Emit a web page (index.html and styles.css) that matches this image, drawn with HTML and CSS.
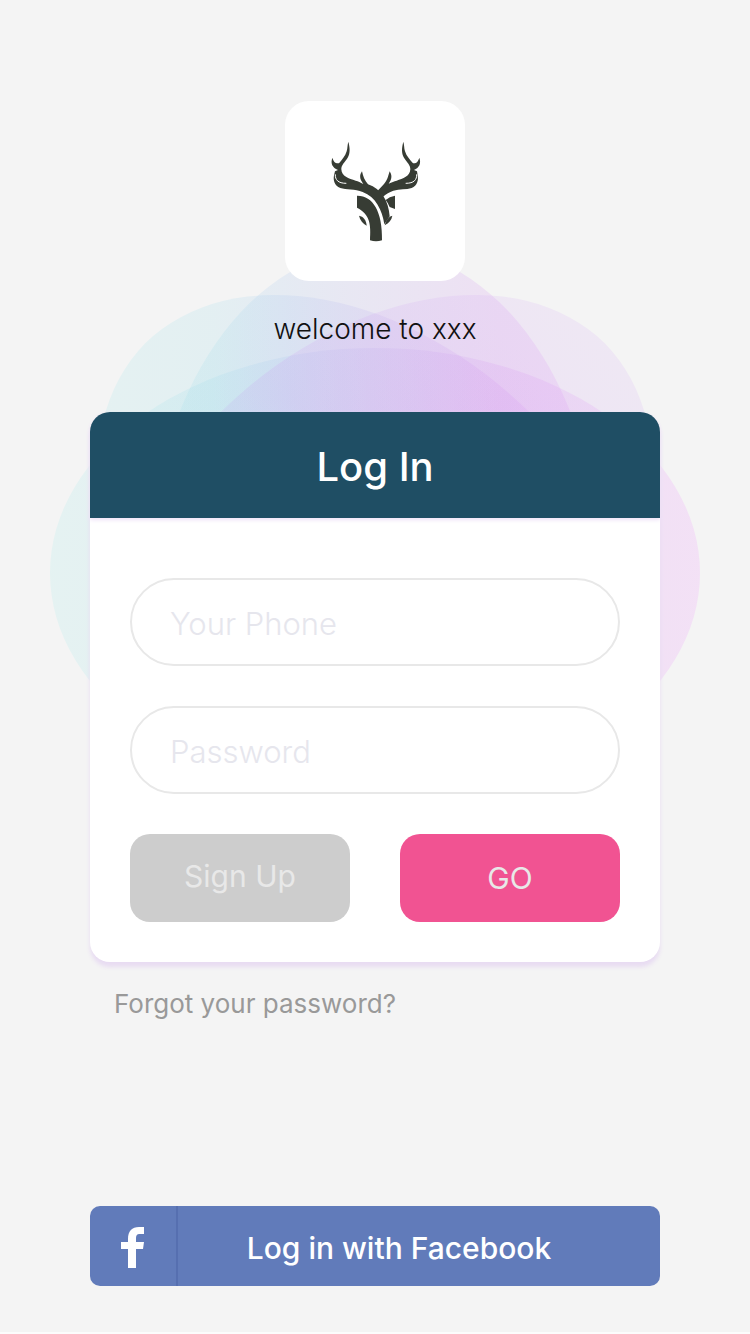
FILE: index.html
```html
<!DOCTYPE html>
<html lang="en">
<head>
  <meta charset="utf-8">
  <meta name="viewport" content="width=device-width, initial-scale=1">
  <title>Log In</title>
  <link rel="stylesheet" href="styles.css">
</head>
<body>
  <main class="page">
    <svg class="petals" viewBox="0 0 650 650" aria-hidden="true">
      <defs>
        <linearGradient id="tint" gradientUnits="userSpaceOnUse" x1="0" y1="0" x2="650" y2="0">
          <stop offset="0" stop-color="#a8ebea"/>
          <stop offset=".25" stop-color="#a0dcea"/>
          <stop offset=".36" stop-color="#a9c6ee"/>
          <stop offset=".5" stop-color="#beaeee"/>
          <stop offset=".69" stop-color="#d690f0"/>
          <stop offset="1" stop-color="#ee94fc"/>
        </linearGradient>
        <linearGradient id="tint-left" gradientUnits="userSpaceOnUse" x1="95" y1="555" x2="555" y2="95">
          <stop offset="0" stop-color="#a0e0ea"/>
          <stop offset=".3" stop-color="#a8d0f0"/>
          <stop offset=".6" stop-color="#cc9cf0"/>
          <stop offset="1" stop-color="#d8b4f4"/>
        </linearGradient>
      </defs>
      <g fill="url(#tint)" fill-opacity=".2">
        <ellipse cx="325" cy="325" rx="325" ry="225"/>
        <ellipse cx="325" cy="325" rx="225" ry="325"/>
        <path d="M95.200 95.200A325 225 45 0 1 554.800 554.800A325 225 45 0 1 95.200 95.200Z"/>
        <path fill="url(#tint-left)" d="M554.800 95.200A325 225 -45 0 1 95.200 554.800A325 225 -45 0 1 554.800 95.200Z"/>
      </g>
    </svg>

    <header class="brand">
      <div class="logo">
        <svg class="logo-mark" viewBox="0 0 330 360" role="img" aria-label="Deer head logo">
          <g fill="#373c34">
            <path d="M85 32C90 50 91 67 83 80C74 94 63 103 64 115C65 136 86 143 107 149C115 151 121 154 130 159C118 144 118 132 126 121C129 135 134 149 144 160C184 174 206 210 209 256L193 280C187 238 167 197 128 183C105 174 78 176 61 171C43 164 39 148 42 133L45 121L54 117C37 109 31 98 37 80C40 89 44 98 57 97C65 87 76 75 80 61C83 51 82 42 85 32Z"/>
            <path d="M250 32C245 50 244 67 252 80C261 94 272 103 271 115C270 136 249 143 230 149C222 151 216 154 206 158C217 144 216 132 209 121C204 137 201 151 190 161L173 179Q182 187 189 197C200 187 207 184 220 179C239 174 259 176 275 171C292 164 296 148 293 133L291 121L282 117C298 109 304 98 298 80C295 89 291 98 279 97C271 87 259 75 255 61C252 51 253 42 250 32Z"/>
            <path d="M111 194C158 193 188 241 186 328Q168 334 150 328C153 281 151 250 111 230Z"/>
            <path d="M197 207Q208 197 225 194V234L209 228Q205 217 197 207Z"/>
            <path d="M117 254C130 256 139 267 140 284C129 278 120 268 117 254Z"/>
            <path d="M217 254C206 257 199 265 194 283C207 276 215 267 217 254Z"/>
          </g>
          <path d="M46 130C45 146 54 157 79 157M290 130C291 146 282 157 257 157" fill="none" stroke="#fff" stroke-width="3"/>
        </svg>
      </div>
      <p class="welcome">welcome to xxx</p>
    </header>

    <form class="card">
      <h1 class="card-title">Log In</h1>
      <div class="card-body">
        <input class="field" type="tel" aria-label="Your Phone" placeholder="Your Phone">
        <input class="field" type="password" aria-label="Password" placeholder="Password">
        <div class="actions">
          <button class="button button-muted" type="button">Sign Up</button>
          <button class="button button-primary" type="submit">GO</button>
        </div>
      </div>
    </form>

    <a class="forgot" href="#">Forgot your password?</a>

    <button class="facebook" type="button">
      <span class="facebook-icon">
        <svg viewBox="0 0 24 42" width="24" height="42" aria-hidden="true">
          <path fill="#fff" d="M7 41V22H0V15H7V12C7 4 11 0 18 0H23V7H19C16 7 15 8 15 12V15H23L22 22H15V41Z"/>
        </svg>
      </span>
      <span class="facebook-label">Log in with Facebook</span>
    </button>
  </main>
</body>
</html>
```
FILE: styles.css
```css
* {
  box-sizing: border-box;
}

body {
  margin: 0;
  background: #f4f4f4;
  font-family: Inter, "Open Sans", sans-serif;
}

.page {
  position: relative;
  display: flex;
  flex-direction: column;
  min-height: 100vh;
  padding: 101px 12% 46px;
  border-bottom: 2px solid #fcfcfc;
  overflow: hidden;
}

/* Overlapping ellipses behind the form */
.petals {
  position: absolute;
  top: 248px;
  left: 50%;
  width: 650px;
  height: 650px;
  transform: translateX(-50%);
}

.brand,
.card,
.forgot,
.facebook {
  position: relative;
}

.brand {
  display: flex;
  flex-direction: column;
  align-items: center;
}

.logo {
  display: flex;
  align-items: center;
  justify-content: center;
  width: 180px;
  height: 180px;
  border-radius: 24px;
  background: #fff;
}

.logo-mark {
  width: 110px;
  height: 120px;
}

.welcome {
  margin: 28px 0 63px;
  color: #111;
  font-size: 28px;
  font-weight: 300;
  line-height: 40px;
}

.card {
  border-radius: 20px;
  background: #fff;
  box-shadow: 0 5px 4px #e8dcf2;
}

.card-title {
  margin: 0;
  padding: 31px 20px 27px;
  border-radius: 20px 20px 0 0;
  background: #1f4e64;
  box-shadow: 0 2px 4px #efe2f8;
  color: #fff;
  font-size: 40px;
  font-weight: 500;
  line-height: 48px;
  text-align: center;
}

.card-body {
  display: flex;
  flex-direction: column;
  gap: 40px;
  padding: 60px 40px 40px;
}

.field {
  width: 100%;
  height: 88px;
  padding: 2px 38px 0;
  border: 2px solid #e8e8e8;
  border-radius: 44px;
  background: #fff;
  color: #333;
  font: 300 31px/40px Inter, "Open Sans", sans-serif;
}

.field::placeholder {
  color: #e6e6ed;
  opacity: 1;
}

.actions {
  display: grid;
  grid-template-columns: 1fr 1fr;
  gap: 50px;
}

.button {
  height: 88px;
  padding: 0;
  border: 0;
  border-radius: 20px;
  color: #e8e8e8;
  font: 400 30px/40px Inter, "Open Sans", sans-serif;
}

.button-muted {
  padding-bottom: 4px;
  background: #cdcdcd;
}

.button-primary {
  background: #f15392;
}

.forgot {
  align-self: flex-start;
  margin: 24px;
  color: #999;
  font-size: 26px;
  line-height: 36px;
  text-decoration: none;
}

.facebook {
  display: flex;
  align-items: stretch;
  width: 100%;
  height: 80px;
  margin-top: auto;
  padding: 0;
  border: 0;
  border-radius: 10px;
  background: #617bba;
  color: #fff;
  font: 500 30px/40px Inter, "Open Sans", sans-serif;
}

.facebook-icon {
  display: flex;
  align-items: center;
  justify-content: center;
  width: 88px;
  padding-top: 4px;
  border-right: 2px solid #566fb0;
}

.facebook-label {
  flex: 1;
  align-self: center;
  padding: 4px 40px 0 0;
}
```
